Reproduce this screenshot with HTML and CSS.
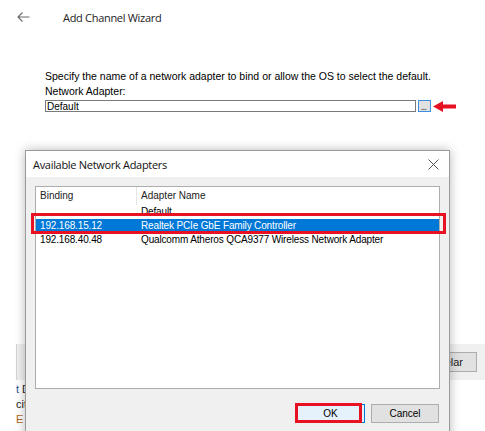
FILE: index.html
```html
<!DOCTYPE html>
<html>
<head>
<meta charset="utf-8">
<link rel="stylesheet" href="styles.css">
</head>
<body>
<div class="wizard">
  <div class="header">
    <svg class="back" width="13" height="10" viewBox="0 0 13 10"><path d="M12.5 5H1M5.5 0.5L1 5l4.5 4.5" fill="none" stroke="#6b6b6b" stroke-width="1.1"/></svg>
    <span class="wiz-title">Add Channel Wizard</span>
  </div>
  <div class="form">
    <div class="line">Specify the name of a network adapter to bind or allow the OS to select the default.</div>
    <div class="line">Network Adapter:</div>
    <div class="input-row">
      <div class="input">Default</div>
      <div class="browse"><span class="dots">...</span></div>
    </div>
  </div>
  <div class="bottom-bar">
    <div class="bar-btn">Cancelar</div>
  </div>
  <div class="behind">
    <div class="bline"><span class="blue">t</span> Devices</div>
    <div class="bline">cit</div>
    <div class="bline"><span class="orange">E</span></div>
  </div>
</div>

<svg class="red-arrow" width="23" height="11" viewBox="0 0 23 11"><path d="M0 5.5L10 0v3.5h13v4H10V11z" fill="#e81123"/></svg>

<div class="dialog">
  <div class="dlg-title">
    <span>Available Network Adapters</span>
    <svg class="close" width="11" height="11" viewBox="0 0 11 11"><path d="M0.5 0.5l10 10M10.5 0.5l-10 10" stroke="#555" stroke-width="1"/></svg>
  </div>
  <div class="dlg-body">
    <div class="list">
      <div class="row head">
        <div class="c1 sep">Binding</div>
        <div class="c2">Adapter Name</div>
      </div>
      <div class="row">
        <div class="c1"></div>
        <div class="c2">Default</div>
      </div>
      <div class="row sel">
        <div class="c1">192.168.15.12</div>
        <div class="c2">Realtek PCIe GbE Family Controller</div>
      </div>
      <div class="row">
        <div class="c1">192.168.40.48</div>
        <div class="c2">Qualcomm Atheros QCA9377 Wireless Network Adapter</div>
      </div>
    </div>
    <div class="buttons">
      <div class="btn ok">OK</div>
      <div class="btn">Cancel</div>
    </div>
  </div>
</div>

<div class="hl hl-row"></div>
<div class="hl hl-ok"></div>
</body>
</html>
```

FILE: styles.css
```css
html, body {
  margin: 0;
  padding: 0;
}
body {
  width: 485px;
  height: 431px;
  overflow: hidden;
  position: relative;
  background: #fff;
  font-family: "Liberation Sans", Arial, sans-serif;
  font-size: 10px;
  color: #000;
}
.wizard {
  display: flex;
  flex-direction: column;
}
.header {
  height: 34px;
  display: flex;
  align-items: center;
  padding-left: 17px;
}
.back {
  display: block;
}
.wiz-title {
  margin-left: 33px;
  font-family: "Open Sans", "Noto Sans", sans-serif;
  font-size: 11px;
  letter-spacing: -0.3px;
  color: #222;
}
.form {
  padding: 35px 0 0 45px;
  font-size: 10.5px;
}
.line {
  height: 15px;
  line-height: 15px;
}
.input-row {
  display: flex;
  margin-top: 1px;
}
.input {
  box-sizing: border-box;
  width: 371px;
  height: 12px;
  border: 1px solid #7a7a7a;
  line-height: 11px;
  padding-left: 1px;
  font-size: 10px;
}
.browse {
  box-sizing: border-box;
  margin-left: 2px;
  width: 13px;
  height: 12px;
  border: 1px solid #3d8ee0;
  background: #e1e1e1;
  position: relative;
}
.dots {
  position: absolute;
  left: 2px;
  bottom: 0;
  font-size: 8px;
  line-height: 6px;
  color: #555;
  letter-spacing: -0.5px;
  font-weight: bold;
}
.bottom-bar {
  margin-top: 232px;
  margin-left: 16px;
  height: 36px;
  background: #f0f0f0;
  border-left: 1px solid #d4d4d4;
  display: flex;
  align-items: center;
  justify-content: flex-end;
  padding-right: 8px;
}
.bar-btn {
  box-sizing: border-box;
  width: 72px;
  height: 20px;
  background: #e1e1e1;
  border: 1px solid #adadad;
  display: flex;
  align-items: center;
  justify-content: center;
  font-size: 11px;
  color: #222;
}
.behind {
  padding: 2px 0 0 16px;
}
.bline {
  height: 15px;
  line-height: 15px;
  font-size: 11px;
  color: #222;
}
.blue { color: #2b5797; }
.orange { color: #b0641e; }

.red-arrow {
  position: absolute;
  left: 433px;
  top: 101px;
}

.dialog {
  position: absolute;
  left: 25px;
  top: 150px;
  width: 425px;
  height: 300px;
  box-sizing: border-box;
  border: 1px solid #9a9a9a;
  background: #f0f0f0;
  box-shadow: 0 0 10px rgba(0, 0, 0, 0.28);
  display: flex;
  flex-direction: column;
}
.dlg-title {
  height: 26px;
  background: #fff;
  display: flex;
  align-items: center;
  justify-content: space-between;
  padding: 0 10px 0 7px;
  font-family: "Open Sans", "Noto Sans", sans-serif;
  font-size: 11px;
  letter-spacing: -0.3px;
  color: #111;
}
.close {
  display: block;
  margin-top: 1px;
}
.dlg-body {
  padding: 9px 9px 0 9px;
  display: flex;
  flex-direction: column;
}
.list {
  box-sizing: border-box;
  height: 203px;
  border: 1px solid #adadad;
  background: #fff;
}
.row {
  display: flex;
  height: 14px;
  line-height: 14px;
  white-space: nowrap;
  letter-spacing: -0.15px;
}
.row.head {
  height: 18px;
  line-height: 18px;
  color: #222;
  letter-spacing: 0;
}
.c1 {
  box-sizing: border-box;
  width: 101px;
  padding-left: 4px;
}
.c2 {
  padding-left: 4px;
}
.sep {
  border-right: 1px solid #e5e5e5;
}
.row.sel {
  background: #0078d7;
  color: #fff;
}
.buttons {
  display: flex;
  justify-content: flex-end;
  gap: 6px;
  margin-top: 15px;
  padding-right: 1px;
}
.btn {
  box-sizing: border-box;
  width: 68px;
  height: 19px;
  border: 1px solid #adadad;
  background: #e1e1e1;
  display: flex;
  align-items: center;
  justify-content: center;
  font-size: 10px;
}
.btn.ok {
  width: 69px;
  border-color: #0078d7;
  background: #e5f1fb;
}

.hl {
  position: absolute;
  box-sizing: border-box;
  border: 3px solid #e81123;
}
.hl-row {
  left: 31px;
  top: 213px;
  width: 415px;
  height: 21px;
}
.hl-ok {
  left: 295px;
  top: 403px;
  width: 67px;
  height: 20px;
}
```
